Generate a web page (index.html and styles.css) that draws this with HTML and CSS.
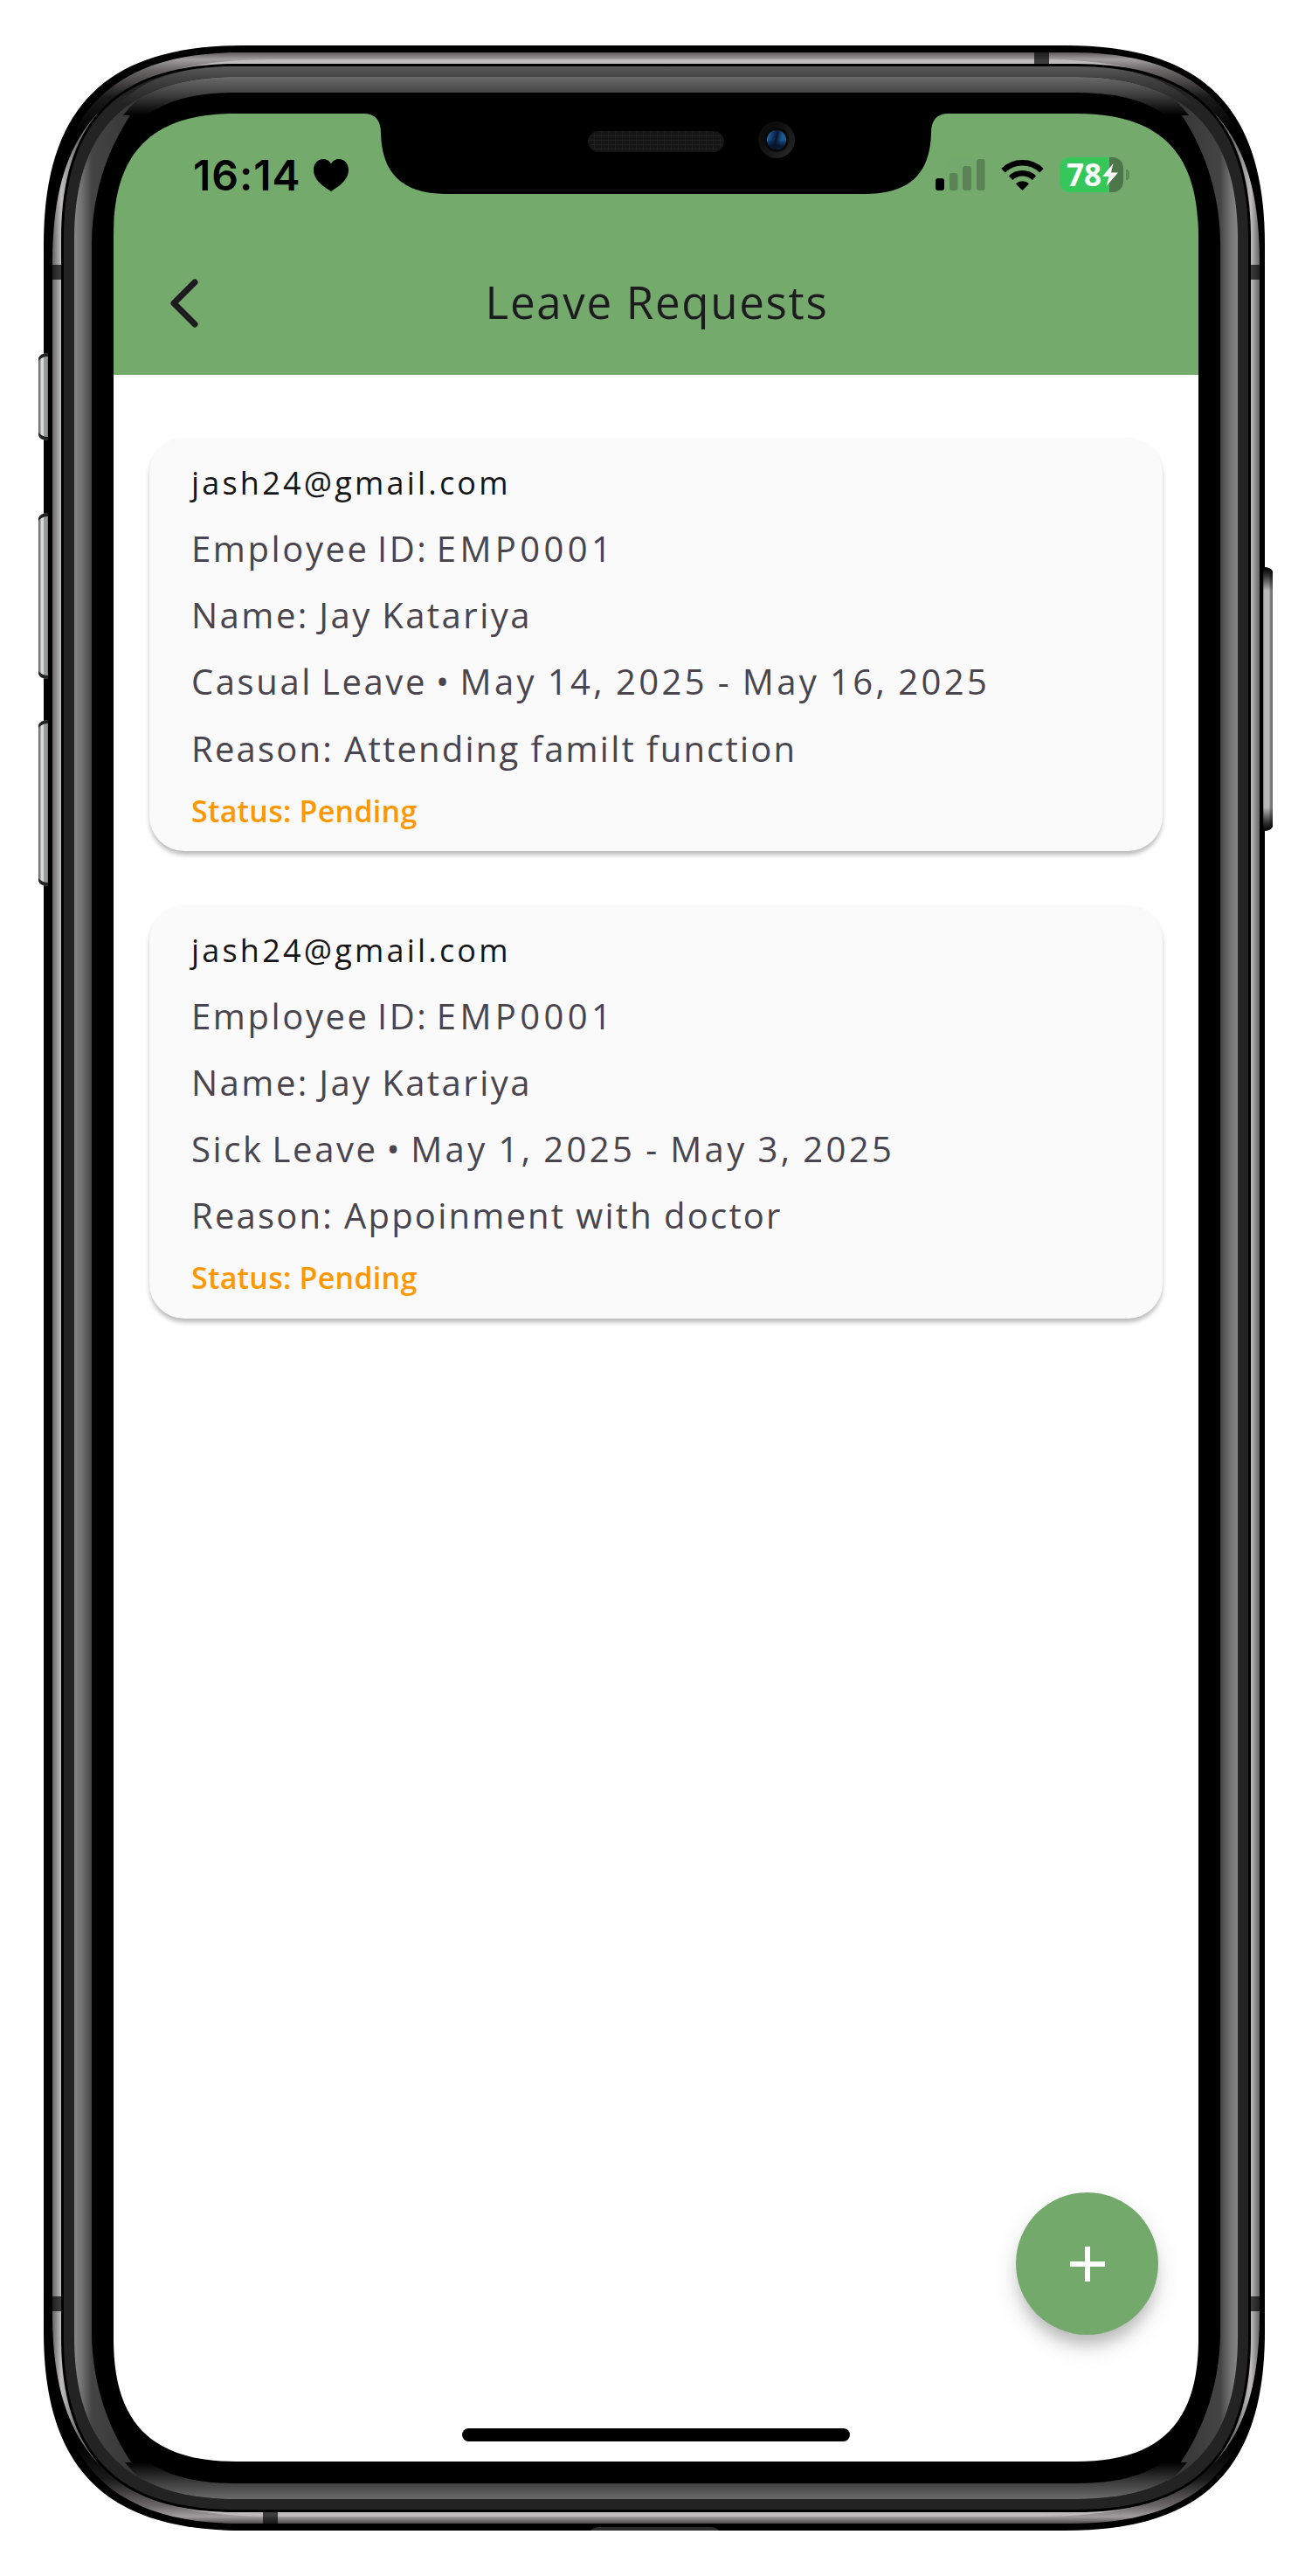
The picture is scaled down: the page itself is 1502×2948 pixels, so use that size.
FILE: index.html
```html
<!DOCTYPE html>
<html lang="en">
<head>
<meta charset="utf-8">
<title>Leave Requests</title>
<link rel="stylesheet" href="styles.css">
</head>
<body>
<div class="device">
  <svg class="frame" viewBox="0 0 1502 2948" aria-hidden="true">
    <defs>
      <linearGradient id="rimV" gradientUnits="userSpaceOnUse" x1="0" y1="60" x2="0" y2="2888">
        <stop offset="0" stop-color="#5c5a5b"/><stop offset=".0028" stop-color="#a09e9f"/><stop offset=".007" stop-color="#6d696a"/><stop offset=".018" stop-color="#1a1a1a"/><stop offset=".032" stop-color="#000"/>
        <stop offset=".968" stop-color="#000"/><stop offset=".982" stop-color="#1a1a1a"/><stop offset=".993" stop-color="#6d696a"/><stop offset=".9972" stop-color="#a09e9f"/><stop offset="1" stop-color="#4c4a4b"/>
      </linearGradient>
      <linearGradient id="rimH" gradientUnits="userSpaceOnUse" x1="60" y1="0" x2="1442" y2="0">
        <stop offset="0" stop-color="#666465"/><stop offset=".0072" stop-color="#bebcbd"/><stop offset=".022" stop-color="#707070"/><stop offset=".06" stop-color="#868686"/><stop offset=".12" stop-color="#bdbbbc"/>
        <stop offset=".88" stop-color="#bdbbbc"/><stop offset=".94" stop-color="#868686"/><stop offset=".978" stop-color="#707070"/><stop offset=".9928" stop-color="#bebcbd"/><stop offset="1" stop-color="#666465"/>
      </linearGradient>
      <linearGradient id="bandTop" gradientUnits="userSpaceOnUse" x1="0" y1="76" x2="0" y2="120">
        <stop offset="0" stop-color="#5a5a5a"/><stop offset=".28" stop-color="#444"/><stop offset="1" stop-color="#222"/>
      </linearGradient>
      <linearGradient id="innerH" gradientUnits="userSpaceOnUse" x1="85" y1="0" x2="1417" y2="0">
        <stop offset="0" stop-color="#868686"/><stop offset=".006" stop-color="#747474"/><stop offset=".015" stop-color="#444"/><stop offset=".06" stop-color="#333"/>
        <stop offset=".94" stop-color="#333"/><stop offset=".985" stop-color="#444"/><stop offset=".994" stop-color="#747474"/><stop offset="1" stop-color="#868686"/>
      </linearGradient>
      <linearGradient id="innerTop" gradientUnits="userSpaceOnUse" x1="0" y1="88" x2="0" y2="132">
        <stop offset="0" stop-color="#6a6a6a"/><stop offset=".41" stop-color="#444"/><stop offset="1" stop-color="#000"/>
      </linearGradient>
      <linearGradient id="innerBottom" gradientUnits="userSpaceOnUse" x1="0" y1="2818" x2="0" y2="2860">
        <stop offset="0" stop-color="#000"/><stop offset=".57" stop-color="#404040"/><stop offset="1" stop-color="#6a6a6a"/>
      </linearGradient>
      <linearGradient id="keyL" x1="0" x2="1" y1="0" y2="0">
        <stop offset="0" stop-color="#555"/><stop offset=".2" stop-color="#999"/><stop offset=".3" stop-color="#d8d8d8"/><stop offset=".5" stop-color="#d8d8d8"/><stop offset=".6" stop-color="#999"/><stop offset=".9" stop-color="#999"/><stop offset="1" stop-color="#666"/>
      </linearGradient>
      <linearGradient id="keyR" x1="0" x2="1" y1="0" y2="0">
        <stop offset="0" stop-color="#777"/><stop offset=".15" stop-color="#b9b9b9"/><stop offset=".6" stop-color="#b9b9b9"/><stop offset=".75" stop-color="#858585"/><stop offset="1" stop-color="#666"/>
      </linearGradient>
      <linearGradient id="keyCaps" x1="0" x2="0" y1="0" y2="1">
        <stop offset="0" stop-color="#000"/><stop offset=".03" stop-color="#000" stop-opacity=".75"/><stop offset=".09" stop-color="#000" stop-opacity="0"/>
        <stop offset=".91" stop-color="#000" stop-opacity="0"/><stop offset=".97" stop-color="#000" stop-opacity=".75"/><stop offset="1" stop-color="#000"/>
      </linearGradient>
      <clipPath id="innerClip"><path d="M85 273C85 149 146 88 270 88H1232C1356 88 1417 149 1417 273V2675C1417 2799 1356 2860 1232 2860H270C146 2860 85 2799 85 2675Z"/></clipPath>
      <clipPath id="rimClip"><path d="M60 275C60 129 129 60 275 60H1227C1373 60 1442 129 1442 275V2673C1442 2819 1373 2888 1227 2888H275C129 2888 60 2819 60 2673Z"/></clipPath>
      <pattern id="mesh" width="8" height="5" patternUnits="userSpaceOnUse"><path d="M0 0H8M0 0V5" stroke="#252525" stroke-width="1.4"/></pattern>
      <linearGradient id="lensRing" x1="0" x2="1" y1="0" y2="1"><stop offset=".3" stop-color="#0d0d0d"/><stop offset="1" stop-color="#2a2a2a"/></linearGradient>
      <linearGradient id="lens" x1="0" x2="1" y1=".3" y2=".5"><stop offset="0" stop-color="#2a6cab"/><stop offset=".25" stop-color="#123d70"/><stop offset=".5" stop-color="#08162f"/><stop offset=".75" stop-color="#1c5790"/><stop offset="1" stop-color="#1d5a98"/></linearGradient>
      <linearGradient id="lensShade" x1="0" x2="0" y1="0" y2="1"><stop offset=".5" stop-color="#06142c" stop-opacity="0"/><stop offset=".8" stop-color="#06142c" stop-opacity=".9"/></linearGradient>
    </defs>
    <path d="M50 280C50 123 121 52 278 52H1220C1377 52 1448 123 1448 280V2668C1448 2825 1377 2896 1220 2896H278C121 2896 50 2825 50 2668Z"/>
    <path fill="#2c2c2c" d="M676 2896Q680 2892 685 2892H814Q819 2892 823 2896Z"/>
    <g clip-path="url(#rimClip)">
      <path fill="url(#rimV)" d="M60 60H1442V2888H60Z"/>
      <path fill="url(#rimH)" d="M60 300C60 140 130 68 310 68H1192C1372 68 1442 140 1442 300V2648C1442 2808 1372 2880 1192 2880H310C130 2880 60 2808 60 2648Z"/>
      <path fill="#000" fill-opacity=".68" d="M60 303H70V320H60ZM1432 303H1442V320H1432ZM60 2628H70V2645H60ZM1432 2628H1442V2645H1432ZM1184 60H1201V73H1184ZM301 2875H318V2888H301Z"/>
    </g>
    <path d="M70 273C70 137 134 73 270 73H1232C1368 73 1432 137 1432 273V2675C1432 2811 1368 2875 1232 2875H270C134 2875 70 2811 70 2675Z"/>
    <path fill="#232323" d="M73 274C73 138 135 76 271 76H1231C1367 76 1429 138 1429 274V2674C1429 2810 1367 2872 1231 2872H271C135 2872 73 2810 73 2674Z"/>
    <path fill="url(#bandTop)" d="M135 120C165 90 205 76 271 76H1231C1297 76 1337 90 1367 120Z"/>
    <g clip-path="url(#innerClip)">
      <path fill="url(#innerH)" d="M85 88H1417V2860H85Z"/>
      <path d="M105 280C105 215 128 145 185 88H1317C1374 145 1397 215 1397 280V2668C1397 2733 1374 2803 1317 2860H185C128 2803 105 2733 105 2668Z"/>
      <path fill="url(#innerTop)" d="M141 132C152 118 168 103 185 88H1317C1334 103 1350 118 1361 132Z"/>
      <path fill="url(#innerBottom)" d="M143 2818C155 2833 170 2847 185 2860H1317C1332 2847 1347 2833 1359 2818Z"/>
    </g>
    <path d="M120 270C120 156 160 106 270 106H1232C1342 106 1382 156 1382 270V2678C1382 2792 1342 2842 1232 2842H270C160 2842 120 2792 120 2678Z"/>
    <path fill="url(#keyL)" d="M55 404Q46 404 44 410V498Q46 504 55 504Z"/>
    <path fill="#222" d="M55 404Q46 404 44 410V413Q48 408 55 408ZM55 504Q46 504 44 498V495Q48 500 55 500Z"/>
    <path fill="url(#keyL)" d="M55 587Q46 587 44 593V771Q46 777 55 777Z"/>
    <path fill="#222" d="M55 587Q46 587 44 593V596Q48 591 55 591ZM55 777Q46 777 44 771V768Q48 773 55 773Z"/>
    <path fill="url(#keyL)" d="M55 824Q46 824 44 830V1008Q46 1014 55 1014Z"/>
    <path fill="#222" d="M55 824Q46 824 44 830V833Q48 828 55 828ZM55 1014Q46 1014 44 1008V1005Q48 1010 55 1010Z"/>
    <path fill="url(#keyR)" d="M1446 649Q1455 649 1457 654V946Q1455 951 1446 951Z"/>
    <path fill="url(#keyCaps)" d="M1446 649Q1455 649 1457 654V946Q1455 951 1446 951Z"/>
  </svg>

  <main class="screen">
    <header class="top">
      <div class="statusbar">
        <div class="clock">
          <span class="time">16:14</span>
          <svg class="heart" viewBox="0 0 40 37"><path d="M20 37C16 34 0 26 0 12.500C0 5 5 0 11 0C15.500 0 18.500 2.500 20 5.500C21.500 2.500 24.500 0 29 0C35 0 40 5 40 12.500C40 26 24 34 20 37Z"/></svg>
        </div>
        <div class="indicators">
          <svg class="signal" viewBox="0 0 57 36"><rect x="0" y="22" width="10" height="14" rx="3"/><g opacity=".22"><rect x="16" y="16" width="9.500" height="20" rx="3"/><rect x="31" y="8" width="10" height="28" rx="3"/><rect x="47" y="0" width="9.500" height="36" rx="3"/></g></svg>
          <svg class="wifi" viewBox="0 0 49 36"><g fill="none" stroke="#000" stroke-width="6.400"><path d="M2.500 13.200A31.500 31.500 0 0 1 46.500 13.200"/><path d="M11 21.800A19.300 19.300 0 0 1 38 21.800"/></g><path d="M24.500 36L16.800 28.300A11.500 11.500 0 0 1 32.200 28.300Z"/></svg>
          <div class="battery"><span class="cell"><span class="percent">78</span><svg class="bolt" viewBox="0 0 18 26"><path fill="#fff" d="M12.500 0L0 15H7.500L4.500 26L18 10.500H10Z"/></svg></span><span class="nub"></span></div>
        </div>
      </div>
      <div class="appbar">
        <svg class="back" viewBox="0 0 32 56"><path d="M28 4L4 28L28 52" fill="none" stroke="#1d1b20" stroke-width="7" stroke-linecap="round" stroke-linejoin="round"/></svg>
        <h1 class="title">Leave Requests</h1>
      </div>
    </header>

    <section class="list">
      <article class="card">
        <h2 class="email">jash24@gmail.com</h2>
        <p class="line id">Employee ID: <span class="code">EMP0001</span></p>
        <p class="line name">Name: Jay Katariya</p>
        <p class="line period">Casual Leave • <span class="dates">May 14, 2025 - May 16, 2025</span></p>
        <p class="line reason">Reason: Attending familt function</p>
        <p class="status">Status: Pending</p>
      </article>
      <article class="card">
        <h2 class="email">jash24@gmail.com</h2>
        <p class="line id">Employee ID: <span class="code">EMP0001</span></p>
        <p class="line name">Name: Jay Katariya</p>
        <p class="line period">Sick Leave • <span class="dates">May 1, 2025 - May 3, 2025</span></p>
        <p class="line reason">Reason: Appoinment with doctor</p>
        <p class="status">Status: Pending</p>
      </article>
    </section>

    <button class="fab" aria-label="Add"><svg viewBox="0 0 40 40"><path d="M20 0V40M0 20H40" stroke="#fff" stroke-width="6"/></svg></button>
    <div class="home"></div>
  </main>

  <svg class="frame" viewBox="0 0 1502 2948" aria-hidden="true">
    <path fill-rule="evenodd" d="M124 270C124 166 166 124 270 124H1232C1336 124 1378 166 1378 270V2677C1378 2781 1336 2823 1232 2823H270C166 2823 124 2781 124 2677ZM130 270C130 174 174 130 270 130H1232C1328 130 1372 174 1372 270V2677C1372 2773 1328 2817 1232 2817H270C174 2817 130 2773 130 2677Z"/>
    <path d="M416 129V130C430 130 436 138 436 152C437 198 460 222 512 222H990C1042 222 1065 198 1066 152C1066 138 1072 130 1086 130V129Z"/>
    <rect x="673" y="150" width="156" height="24" rx="12" fill="#151515"/>
    <rect x="675" y="151" width="152" height="21" rx="10.500" fill="url(#mesh)"/>
    <circle cx="889" cy="160" r="21" fill="url(#lensRing)"/>
    <circle cx="889" cy="160" r="14" fill="#080808"/>
    <circle cx="889" cy="160" r="11" fill="url(#lens)"/>
    <circle cx="889" cy="160" r="11" fill="url(#lensShade)"/>
  </svg>
</div>
</body>
</html>
```
FILE: styles.css
```css
* { box-sizing: border-box; }
body { margin: 0; background: #fff; font-family: "Open Sans", "Noto Sans", sans-serif; }
h1, h2, p { margin: 0; font-weight: 400; white-space: nowrap; }
svg { display: block; }

.device { position: relative; width: 1502px; height: 2948px; padding: 130px; overflow: hidden; }
.frame { position: absolute; inset: 0; width: 1502px; height: 2948px; pointer-events: none; }

.screen { position: relative; width: 1242px; height: 2687px; display: flex; flex-direction: column; background: #fff; border-radius: 110px; overflow: hidden; }

.top { height: 299px; flex: none; background: #74aa6c; }
.statusbar { height: 140px; padding: 50px 79px 0 91px; display: flex; justify-content: space-between; align-items: flex-start; }
.clock { display: flex; align-items: center; gap: 9px; height: 41px; }
.time { width: 129px; font: 600 48px/41px Inter, sans-serif; letter-spacing: 1px; color: #000; white-space: nowrap; }
.heart { width: 40px; height: 37px; }
.indicators { display: flex; align-items: center; height: 40px; }
.signal { width: 57px; height: 36px; margin-right: 18px; }
.wifi { width: 49px; height: 36px; margin-right: 18px; }
.battery { display: flex; align-items: center; gap: 3px; }
.cell { display: flex; align-items: center; width: 73px; height: 40px; padding-left: 8px; border-radius: 12px; background: linear-gradient(90deg, #35c75a 57px, #4e764b 57px); }
.percent { width: 41px; font: 700 35px/40px "Noto Sans", sans-serif; color: #fff; }
.bolt { width: 18px; height: 26px; }
.nub { width: 4px; height: 12px; border-radius: 0 4px 4px 0; background: #5a8a55; }

.appbar { height: 159px; padding: 0 63px 0 65px; display: grid; grid-template-columns: 32px 1fr 32px; align-items: start; }
.back { width: 32px; height: 56px; margin-top: 49px; }
.title { margin-top: 40px; text-align: center; font-size: 51px; line-height: 70px; letter-spacing: 1.7px; color: #1d1b20; }

.list { padding: 72px 41px 0; display: flex; flex-direction: column; gap: 61.6px; }
.card { height: 473px; padding: 15px 48px 0; border-radius: 40px; background: #fafafa; box-shadow: 0 5px 5px -1px rgba(0,0,0,.2), 0 4px 6px rgba(0,0,0,.1); }
.email { height: 74px; font-size: 36px; line-height: 74px; letter-spacing: 3.2px; color: #161518; }
.line { height: 76.2px; font-size: 40px; line-height: 76px; letter-spacing: 2.6px; color: #49454f; }
.id { word-spacing: -3.7px; }
.code { letter-spacing: 4.4px; }
.name { letter-spacing: 2.5px; word-spacing: -1.5px; }
.period { word-spacing: -3px; }
.dates { letter-spacing: 3.4px; word-spacing: -2px; }
.reason { letter-spacing: 2.2px; word-spacing: -.5px; }
.status { font-size: 34px; font-weight: 600; line-height: 66px; letter-spacing: .25px; color: #ff9800; }

.fab { position: absolute; left: 1033px; top: 2379px; width: 163px; height: 163px; padding: 0; border: 0; border-radius: 50%; display: grid; place-items: center; background: #73a96b; box-shadow: 0 15px 16px -4px rgba(0,0,0,.18), 0 12px 30px rgba(0,0,0,.13); }
.fab svg { width: 40px; height: 40px; }
.home { position: absolute; left: 399px; top: 2649px; width: 444px; height: 15px; border-radius: 8px; background: #000; }
```
